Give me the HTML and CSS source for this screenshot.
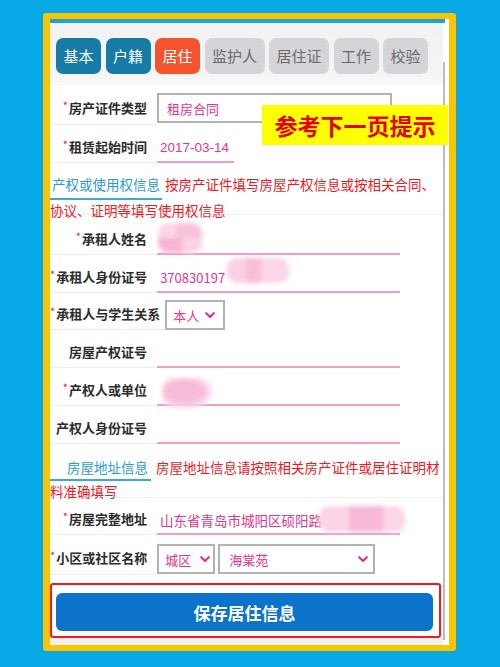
FILE: index.html
```html
<!DOCTYPE html>
<html lang="zh-CN">
<head>
<meta charset="utf-8">
<title>居住信息</title>
<link rel="stylesheet" href="styles.css">
</head>
<body>
<div class="frame">
  <div class="strip"></div>
  <div class="body-row">
    <div class="main">
      <div class="tabs">
        <div class="tab tab-done">基本</div>
        <div class="tab tab-done">户籍</div>
        <div class="tab tab-active">居住</div>
        <div class="tab">监护人</div>
        <div class="tab">居住证</div>
        <div class="tab">工作</div>
        <div class="tab">校验</div>
      </div>
      <div class="form">
        <div class="row row-sel h39">
          <div class="label"><span class="req">*</span>房产证件类型</div>
          <div class="select sel-wide"><span class="val">租房合同</span></div>
        </div>
        <div class="row h38">
          <div class="label"><span class="req">*</span>租赁起始时间</div>
          <div class="input input-date"><span class="val">2017-03-14</span></div>
        </div>
        <div class="section sec1">
          <span class="sec-title t1">产权或使用权信息</span><span class="sec-note n1">按房产证件填写房屋产权信息或按相关合同、</span><br><span class="sec-note">协议、证明等填写使用权信息</span>
        </div>
        <div class="row h40">
          <div class="label"><span class="req">*</span>承租人姓名</div>
          <div class="input"><div class="blob blob-name"></div></div>
        </div>
        <div class="row h38">
          <div class="label"><span class="req">*</span>承租人身份证号</div>
          <div class="input"><span class="val">370830197</span><div class="blob blob-id"></div></div>
        </div>
        <div class="row row-sel h37">
          <div class="label label-long"><span class="req">*</span>承租人与学生关系</div>
          <div class="select sel-rel"><span class="val">本人</span><svg class="chev" width="10" height="7" viewBox="0 0 10 7"><polyline points="1.2,1.2 5,5 8.8,1.2" fill="none" stroke="#e5358c" stroke-width="2.2" stroke-linecap="round" stroke-linejoin="round"/></svg></div>
        </div>
        <div class="row h38">
          <div class="label">房屋产权证号</div>
          <div class="input"></div>
        </div>
        <div class="row h38">
          <div class="label"><span class="req">*</span>产权人或单位</div>
          <div class="input"><div class="blob blob-owner"></div></div>
        </div>
        <div class="row h38">
          <div class="label">产权人身份证号</div>
          <div class="input"></div>
        </div>
        <div class="section sec2">
          <span class="sec-title t2">房屋地址信息</span><span class="sec-note n2">房屋地址信息请按照相关房产证件或居住证明材</span><br><span class="sec-note">料准确填写</span>
        </div>
        <div class="row h37">
          <div class="label"><span class="req">*</span>房屋完整地址</div>
          <div class="input"><span class="val val-addr">山东省青岛市城阳区硕阳路</span><div class="blob blob-addr"></div></div>
        </div>
        <div class="row row-sel h40">
          <div class="label"><span class="req">*</span>小区或社区名称</div>
          <div class="select sel-area"><span class="val">城区</span><svg class="chev" width="10" height="7" viewBox="0 0 10 7"><polyline points="1.2,1.2 5,5 8.8,1.2" fill="none" stroke="#e5358c" stroke-width="2.2" stroke-linecap="round" stroke-linejoin="round"/></svg></div>
          <div class="select sel-comm"><span class="val">海棠苑</span><svg class="chev" width="10" height="7" viewBox="0 0 10 7"><polyline points="1.2,1.2 5,5 8.8,1.2" fill="none" stroke="#e5358c" stroke-width="2.2" stroke-linecap="round" stroke-linejoin="round"/></svg></div>
        </div>
      </div>
      <div class="save-box">
        <button class="save" type="button">保存居住信息</button>
      </div>
      <div class="foot"></div>
    </div>
    <div class="scroll"><div class="thumb"></div></div>
  </div>
  <div class="banner">参考下一页提示</div>
</div>
</body>
</html>
```

FILE: styles.css
```css
html, body {
  margin: 0;
  padding: 0;
}
body {
  background: #06a9e6;
  font-family: "Noto Sans CJK SC", "Noto Sans", sans-serif;
  height: 667px;
  overflow: hidden;
}
.frame {
  position: relative;
  width: 399px;
  margin: 13px 0 0 43px;
  border: 7px solid #fbc300;
  border-top-width: 6px;
  border-bottom-width: 6px;
  border-radius: 3px;
  background: #ffffff;
}
.strip {
  height: 4px;
  width: 395px;
  background: #1ba3e0;
}
.body-row {
  display: flex;
}
.main {
  width: 393px;
  background: #ffffff;
}
.scroll {
  width: 6px;
  display: flex;
  flex-direction: column;
  padding-top: 39px;
  padding-bottom: 5px;
  box-sizing: border-box;
  background: #ffffff;
}
.thumb {
  flex: 1;
  width: 2px;
  background: #bcbcbc;
}

/* tabs */
.tabs {
  display: flex;
  gap: 4.5px;
  padding: 15px 0 12px 6px;
  background: linear-gradient(#f2f2f2, #f4f4f4 80%, #fafafa);
}
.tab {
  height: 36px;
  line-height: 36px;
  padding: 0 7.5px;
  font-size: 15px;
  border-radius: 7px;
  background: #d5d5d9;
  color: #6a6a6a;
}
.tab-done {
  background: #177ca5;
  color: #ffffff;
}
.tab-active {
  background: #f5532e;
  color: #ffffff;
}

/* form rows */
.form {
  background: #ffffff;
}
.row {
  display: flex;
  align-items: flex-end;
  box-sizing: border-box;
}
.h37 { height: 37px; }
.h38 { height: 38px; }
.h39 { height: 39px; }
.h40 { height: 40px; }
.label {
  align-self: stretch;
  display: flex;
  align-items: flex-end;
  justify-content: flex-end;
  box-sizing: border-box;
  min-width: 107px;
  padding: 0 10px 6px 0;
  border-bottom: 1px solid #ededed;
  font-size: 13px;
  line-height: 18px;
  font-weight: 700;
  color: #2b2b2b;
  white-space: nowrap;
}
.row-sel .label {
  padding-bottom: 7px;
}
.row-sel .label-long {
  padding-right: 5px;
  padding-bottom: 6px;
}
.req {
  color: #e5262a;
  font-size: 11px;
  font-weight: 400;
  position: relative;
  top: -3px;
  margin-right: 1px;
}
.val {
  color: #e5358c;
  font-size: 13px;
  white-space: nowrap;
}
.input {
  display: flex;
  align-items: flex-end;
  box-sizing: border-box;
  width: 243px;
  height: 28px;
  padding-left: 3px;
  line-height: 26px;
  border-bottom: 2px solid #f59bc7;
}
.input-date {
  width: 77px;
}
.input-date .val {
  font-family: "Liberation Sans", Arial, sans-serif;
  font-size: 13.5px;
}
.val-addr {
  font-size: 13.5px;
}
.select {
  display: flex;
  align-items: center;
  justify-content: space-between;
  box-sizing: border-box;
  height: 30px;
  padding: 0 9px 0 8px;
  border: 2px solid #b3b3b3;
  background: #ffffff;
}
.sel-wide {
  width: 235px;
  margin-bottom: 2px;
}
.sel-rel {
  width: 60px;
  padding: 0 8px 0 6px;
}
.sel-area {
  width: 58px;
  margin-bottom: 1px;
  padding: 0 3px 0 6px;
}
.sel-comm {
  width: 157px;
  margin-left: 3px;
  margin-bottom: 1px;
  padding: 0 5px 0 9px;
}
.chev {
  display: block;
  flex: none;
}

/* redaction blobs */
.blob {
  flex: none;
  border-radius: 10px;
  filter: blur(2px);
}
.blob-name {
  width: 44px;
  height: 30px;
  margin-left: -2px;
  background:
    linear-gradient(90deg, transparent 0 40%, #f8c3dc 40% 100%) top / 100% 50% no-repeat,
    linear-gradient(90deg, #f6b6d3 0 55%, #fbd3e6 55% 100%) bottom / 100% 50% no-repeat,
    #fbd6e8;
}
.blob-id {
  width: 62px;
  height: 25px;
  margin-bottom: 8px;
  margin-left: 2px;
  background: linear-gradient(90deg, #fbd0e4 0 30%, #f8bdd9 30% 55%, #fbd6e8 55% 100%);
}
.blob-owner {
  width: 50px;
  height: 30px;
  margin-left: 2px;
  margin-bottom: -4px;
  background: radial-gradient(ellipse at 45% 45%, #f7bcd8 0 45%, #fbdbe9 65%, rgba(255,255,255,0) 80%);
}
.blob-addr {
  width: 86px;
  height: 26px;
  margin-left: -3px;
  margin-bottom: 1px;
  background: linear-gradient(90deg, #fbd4e6 0 35%, #f7b9d6 35% 75%, #fbd6e8 75% 100%);
}

/* section headers */
.section {
  box-sizing: border-box;
  border-bottom: 1px solid #efefef;
  font-size: 13.5px;
  overflow: visible;
}
.sec1 {
  height: 52px;
  padding-top: 8px;
  line-height: 26px;
}
.sec2 {
  height: 54px;
  padding-top: 11px;
  line-height: 24px;
}
.sec-title {
  display: inline-block;
  line-height: 20px;
  color: #2b9ad6;
  border-bottom: 2px solid #3aa7dd;
  margin-bottom: -8px;
}
.t1 {
  padding: 0 2px 4px 2px;
}
.t2 {
  padding: 0 3px 2px 17px;
}
.sec-note {
  color: #f0191f;
}
.n1 {
  padding-left: 3px;
}
.n2 {
  padding-left: 5px;
}

/* save */
.save-box {
  box-sizing: border-box;
  width: 391px;
  height: 55px;
  margin-top: 8px;
  padding: 8px 6px 5px 4px;
  border: 2px solid #f5191d;
  border-radius: 3px;
  background: #ffffff;
}
.save {
  display: block;
  width: 100%;
  height: 38px;
  border: none;
  border-radius: 6px;
  background: #0b73c9;
  color: #ffffff;
  font-family: "Noto Sans CJK SC", "Noto Sans", sans-serif;
  font-size: 17px;
  font-weight: 700;
  padding: 0;
}
.foot {
  height: 7px;
  background: #f0f0f0;
}

/* overlay banner */
.banner {
  position: absolute;
  left: 212px;
  top: 86px;
  width: 186px;
  height: 40px;
  background: #ffff00;
  color: #e3000f;
  font-size: 23px;
  font-weight: 700;
  line-height: 40px;
  text-align: center;
}
```
